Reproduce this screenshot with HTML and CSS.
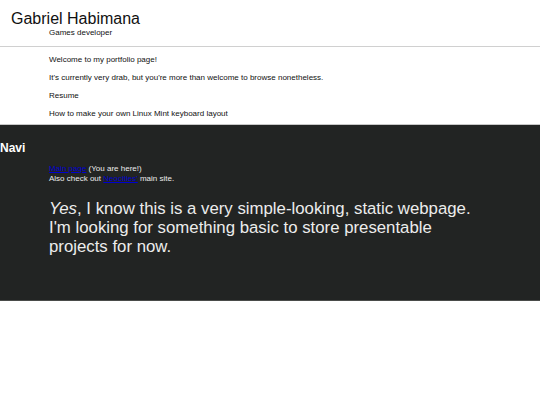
FILE: index.html
```html
<!DOCTYPE html>
<html>
<head>
<meta charset="utf-8">
<link rel="stylesheet" href="styles.css">
</head>
<body>
<header class="top">
  <h1 class="name">Gabriel Habimana</h1>
  <div class="role">Games developer</div>
</header>
<main class="intro">
  <p>Welcome to my portfolio page!</p>
  <p>It's currently very drab, but you're more than welcome to browse nonetheless.</p>
  <p>Resume</p>
  <p>How to make your own Linux Mint keyboard layout</p>
</main>
<section class="navi">
  <h2 class="navi-title">Navi</h2>
  <div class="links">
    <a href="#">Main page</a> (You are here!)<br>
    Also check out <a href="#">Neocities'</a> main site.
  </div>
  <p class="note"><em>Yes</em>, I know this is a very simple-looking, static webpage. I'm looking for something basic to store presentable projects for now.</p>
</section>
</body>
</html>
```
FILE: styles.css
```css
html, body {
  margin: 0;
  padding: 0;
  background: #fff;
  font-family: "Liberation Sans", Arial, sans-serif;
  color: #111;
}
.top {
  padding: 10px 0 8px 0;
  border-bottom: 1px solid #d0d0d0;
}
.name {
  margin: 0 0 0 11px;
  font-size: 16px;
  font-weight: normal;
  line-height: 18px;
}
.role {
  margin-left: 49px;
  font-size: 8px;
  line-height: 10px;
}
.intro {
  padding: 8px 0 6px 49px;
  display: flex;
  flex-direction: column;
  gap: 9px;
}
.intro p {
  margin: 0;
  font-size: 8px;
  line-height: 9px;
}
.navi {
  background: #222423;
  color: #ececec;
  border-top: 1px solid #c8c8c8;
  border-bottom: 1px solid #4a4c4a;
  height: 177px;
  box-sizing: border-box;
  padding-top: 16px;
}
.navi-title {
  margin: 0;
  font-size: 12px;
  font-weight: bold;
  line-height: 14px;
  color: #fff;
}
.links {
  margin: 9px 0 0 49px;
  font-size: 8px;
  line-height: 10px;
}
.links a {
  color: #0000d0;
}
.note {
  margin: 15px 0 0 49px;
  font-size: 16.8px;
  line-height: 19px;
  max-width: 428px;
}
```
